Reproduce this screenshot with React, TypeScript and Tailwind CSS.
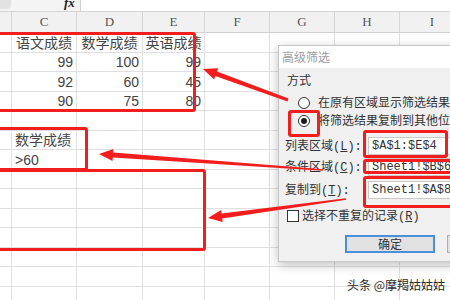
const COL_W = ['w-[12px]', 'w-[65px]', 'w-[66px]', 'w-[62px]', 'w-[65px]', 'w-[65px]', 'w-[65px]', 'w-[65px]']
const LETTERS = ['', 'C', 'D', 'E', 'F', 'G', 'H', 'I']

type Cell = { t: string; a: 'l' | 'c' | 'r' }

const DATA: Record<number, Record<number, Cell>> = {
  0: { 1: { t: '语文成绩', a: 'c' }, 2: { t: '数学成绩', a: 'c' }, 3: { t: '英语成绩', a: 'c' } },
  1: { 1: { t: '99', a: 'r' }, 2: { t: '100', a: 'r' }, 3: { t: '99', a: 'r' } },
  2: { 1: { t: '92', a: 'r' }, 2: { t: '60', a: 'r' }, 3: { t: '45', a: 'r' } },
  3: { 1: { t: '90', a: 'r' }, 2: { t: '75', a: 'r' }, 3: { t: '80', a: 'r' } },
  5: { 1: { t: '数学成绩', a: 'l' } },
  6: { 1: { t: '>60', a: 'l' } },
}

const ALIGN = { l: 'justify-start', c: 'justify-center', r: 'justify-end' }

// tapered arrow: thin at the tail, solid triangle head at the tip
function arrow(tx: number, ty: number, hx: number, hy: number, w0: number, w1: number, L = 14, W = 12) {
  const dx = hx - tx
  const dy = hy - ty
  const len = Math.hypot(dx, dy)
  const ux = dx / len
  const uy = dy / len
  const nx = -uy
  const ny = ux
  const bx = hx - ux * L
  const by = hy - uy * L
  const p = [
    [tx + (nx * w0) / 2, ty + (ny * w0) / 2],
    [bx + (nx * w1) / 2, by + (ny * w1) / 2],
    [bx + (nx * W) / 2, by + (ny * W) / 2],
    [hx, hy],
    [bx - (nx * W) / 2, by - (ny * W) / 2],
    [bx - (nx * w1) / 2, by - (ny * w1) / 2],
    [tx - (nx * w0) / 2, ty - (ny * w0) / 2],
  ]
  return p.map(([x, y]) => `${x.toFixed(1)},${y.toFixed(1)}`).join(' ')
}

function Radio({ checked }: { checked?: boolean }) {
  return (
    <span className="w-[12px] h-[12px] rounded-full border border-[#333] bg-white flex items-center justify-center shrink-0">
      {checked && <span className="w-[6px] h-[6px] rounded-full bg-[#1a1a1a]" />}
    </span>
  )
}

function RangeRow({ label, k, value, mt }: { label: string; k: string; value: string; mt: string }) {
  return (
    <div className={`${mt} h-[20px] flex items-center whitespace-nowrap`}>
      <span className="w-[83px] shrink-0">
        {label}
        <span className="font-['Liberation_Mono',monospace]">
          (<span className="underline">{k}</span>):
        </span>
      </span>
      <span className="flex-1 h-[18px] bg-white border border-[#c9c9c9] flex items-center pl-[3px] font-['Liberation_Mono',monospace] text-[12px] text-[#333] overflow-hidden">
        {value}
      </span>
    </div>
  )
}

export default function App() {
  return (
    <div className="relative w-[450px] h-[300px] overflow-hidden bg-white font-['Liberation_Sans','Noto_Sans_CJK_SC',sans-serif]">
      {/* 编辑栏 */}
      <div className="h-[12px] flex border-b border-[#d4d4d4]">
        <div className="w-[80px] bg-[#f4f4f4] flex items-start">
          <span className="w-[11px] h-[9px] rounded-br-[4px] bg-[#e2e2e2]" />
          <span className="ml-[53px] -mt-[4px] font-['Liberation_Serif',serif] italic font-bold text-[13px] leading-none text-[#222]">fx</span>
        </div>
        <div className="flex-1 border-l border-[#cfcfcf] bg-white" />
      </div>

      {/* 列标题 */}
      <div className="h-[21px] flex bg-[#f1f1f1] border-b border-[#d0d0d0]">
        {LETTERS.map((l, i) => (
          <div key={i} className={`${COL_W[i]} shrink-0 border-r border-[#d6d6d6] flex items-center justify-center font-['Liberation_Serif',serif] text-[13px] text-[#555]`}>
            {l}
          </div>
        ))}
      </div>

      {/* 表格 */}
      {Array.from({ length: 14 }).map((_, r) => (
        <div key={r} className="h-[19.5px] flex border-b border-[#e0e0e0]">
          {COL_W.map((w, c) => {
            const cell = DATA[r]?.[c]
            return (
              <div key={c} className={`${w} shrink-0 border-r border-[#e0e0e0] flex items-center pt-[2px] px-[3px] text-[14px] text-[#444] whitespace-nowrap ${cell ? ALIGN[cell.a] : ''}`}>
                {cell?.t}
              </div>
            )
          })}
        </div>
      ))}

      {/* 高级筛选 对话框 */}
      <div className="absolute left-[278px] top-[45px] w-[192px] h-[217px] border border-[#c6c6c6] bg-[#f0f0f0] shadow-[0_3px_10px_rgba(0,0,0,0.25)] flex flex-col text-[12px] text-[#333] font-['Noto_Sans_CJK_SC',sans-serif]">
        <div className="h-[22px] bg-white flex items-center pl-[3px] text-[#9d9d9d]">高级筛选</div>
        <div className="flex-1 flex flex-col pl-[6px]">
          <div className="mt-[4px] h-[16px] flex items-center pl-[2px]">方式</div>
          <div className="mt-[6px] h-[18px] flex items-center gap-[8px] pl-[13px] whitespace-nowrap">
            <Radio />
            <span>
              在原有区域显示筛选结果<span className="font-['Liberation_Mono',monospace]">(<span className="underline">F</span>)</span>
            </span>
          </div>
          <div className="h-[17px] flex items-center gap-[8px] pl-[13px] whitespace-nowrap">
            <Radio checked />
            <span>
              将筛选结果复制到其他位置<span className="font-['Liberation_Mono',monospace]">(<span className="underline">O</span>)</span>
            </span>
          </div>
          <RangeRow mt="mt-[7px]" label="列表区域" k="L" value="$A$1:$E$4" />
          <RangeRow mt="mt-[1px]" label="条件区域" k="C" value="Sheet1!$B$6:$B$7" />
          <RangeRow mt="mt-[3px]" label="复制到" k="T" value="Sheet1!$A$8:$E$11" />
          <div className="mt-[7px] h-[18px] flex items-center gap-[3px] pl-[2px] whitespace-nowrap">
            <span className="w-[12px] h-[12px] border border-[#333] bg-white shrink-0" />
            <span>
              选择不重复的记录<span className="font-['Liberation_Mono',monospace]">(<span className="underline">R</span>)</span>
            </span>
          </div>
          <div className="mt-[10px] flex gap-[12px] ml-[60px]">
            <div className="w-[90px] h-[18px] shrink-0 bg-[#e1e1e1] border-2 border-[#4a90d9] flex items-center justify-center">确定</div>
            <div className="w-[90px] h-[18px] shrink-0 bg-[#e1e1e1] border border-[#adadad] flex items-center justify-center">取消</div>
          </div>
        </div>
      </div>

      {/* 红框标注 */}
      <div className="absolute left-[-5px] top-[32px] w-[201px] h-[80px] border-[3px] border-[#f21d1d] rounded-[3px]" />
      <div className="absolute left-[-5px] top-[127px] w-[93px] h-[44px] border-[3px] border-[#f21d1d] rounded-[3px]" />
      <div className="absolute left-[-5px] top-[169px] w-[211px] h-[82px] border-[3px] border-[#f21d1d] rounded-[3px]" />
      <div className="absolute left-[288px] top-[110px] w-[32px] h-[27px] border-[3px] border-[#f21d1d] rounded-[3px]" />
      <div className="absolute left-[363px] top-[130px] w-[85px] h-[28px] border-[3px] border-[#f21d1d] rounded-[3px]" />
      <div className="absolute left-[363px] top-[159px] w-[95px] h-[15px] border-[3px] border-[#f21d1d] rounded-[3px]" />
      <div className="absolute left-[363px] top-[176px] w-[95px] h-[32px] border-[3px] border-[#f21d1d] rounded-[3px]" />

      {/* 箭头 */}
      <svg className="absolute inset-0 pointer-events-none" width={450} height={300}>
        <polygon points={arrow(288, 100, 203, 69, 3, 5)} fill="#f21d1d" />
        <polygon points={arrow(323, 170, 99, 154, 1.5, 5)} fill="#f21d1d" />
        <polygon points={arrow(346, 199, 208, 218, 1.5, 5)} fill="#f21d1d" />
      </svg>

      {/* 水印 */}
      <div className="absolute left-[347px] top-[277px] text-[12px] leading-[16px] text-[#2a2a2a] font-['Noto_Sans_CJK_SC',sans-serif] whitespace-nowrap [text-shadow:0_0_2px_#fff]">
        头条 @摩羯姑姑姑
      </div>
    </div>
  )
}
